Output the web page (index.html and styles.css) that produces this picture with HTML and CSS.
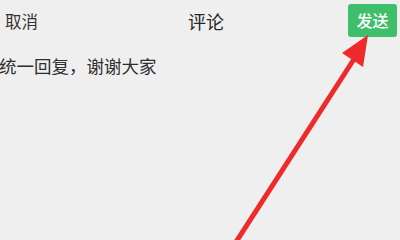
FILE: index.html
```html
<!DOCTYPE html>
<html lang="zh-CN">
<head>
<meta charset="utf-8">
<link rel="stylesheet" href="styles.css">
</head>
<body>
<div class="page">
  <header class="bar">
    <span class="cancel">取消</span>
    <span class="title">评论</span>
    <button class="send">发送</button>
  </header>
  <p class="comment">统一回复，谢谢大家</p>
  <svg class="arrow" width="400" height="240" viewBox="0 0 400 240">
    <line x1="236" y1="242" x2="356" y2="56" stroke="#ef2a2a" stroke-width="5"/>
    <polygon points="368,35 342,53 363,67" fill="#ef2a2a"/>
  </svg>
</div>
</body>
</html>
```
FILE: styles.css
```css
* { box-sizing: border-box; }
html, body {
  margin: 0;
  padding: 0;
  width: 400px;
  height: 240px;
  overflow: hidden;
  background: #efefef;
}
.page {
  position: relative;
  width: 400px;
  height: 240px;
  font-family: "Noto Sans CJK SC", "Noto Sans", sans-serif;
  color: #333;
}
.bar {
  display: grid;
  grid-template-columns: 1fr auto 1fr;
  align-items: center;
  height: 41px;
  padding: 0 3px 0 5px;
}
.cancel {
  justify-self: start;
  font-size: 16.5px;
  color: #333;
}
.title {
  font-size: 18px;
  padding-left: 10px;
  color: #262626;
}
.send {
  justify-self: end;
  width: 49px;
  height: 33px;
  border: 0;
  border-radius: 3px;
  background: #3dbf6b;
  color: #fff;
  font-family: inherit;
  font-size: 16px;
  font-weight: 500;
  padding: 0;
  line-height: 33px;
}
.comment {
  margin: 13px 0 0 -1px;
  font-size: 17.5px;
  line-height: 24px;
  color: #2e2e2e;
}
.arrow {
  position: absolute;
  left: 0;
  top: 0;
  pointer-events: none;
}
```
